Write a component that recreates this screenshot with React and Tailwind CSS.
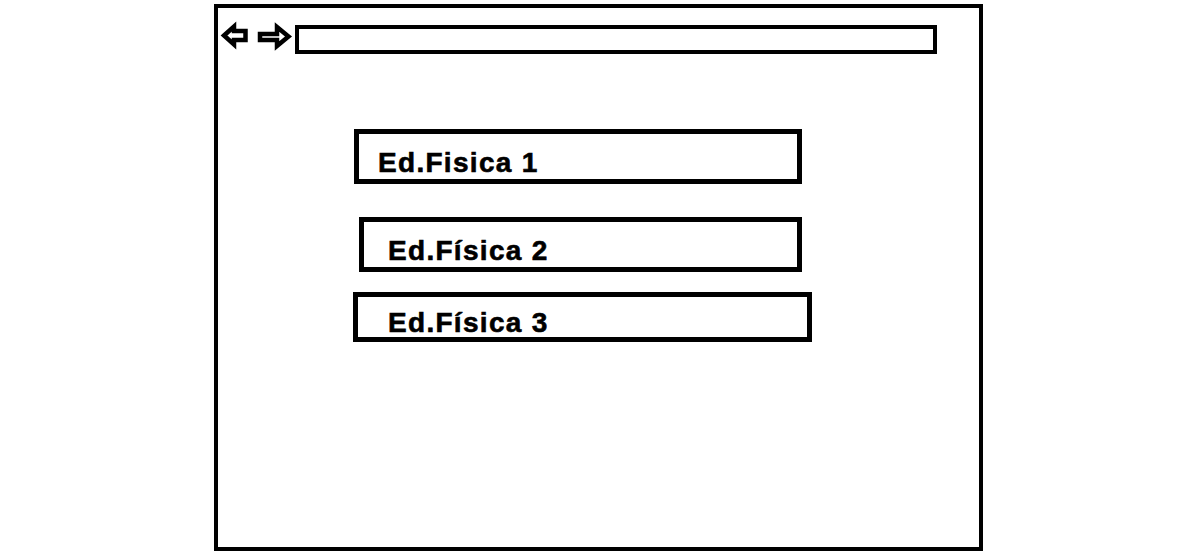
export default function App() {
  const items = [
    { label: "Ed.Fisica 1", box: "ml-[136px] mt-[75px] w-[448px] h-[55px] pl-[19px] pt-[15px]" },
    { label: "Ed.Física 2", box: "ml-[141px] mt-[33px] w-[443px] h-[55px] pl-[24px] pt-[15px]" },
    { label: "Ed.Física 3", box: "ml-[135px] mt-[20px] w-[459px] h-[50px] pl-[30px] pt-[12px]" },
  ];
  return (
    <div className="w-[1198px] h-[554px] bg-white overflow-hidden">
      <div className="ml-[214px] mt-[4px] w-[769px] h-[547px] border-4 border-black flex flex-col items-start">
        <div className="flex items-start pt-[17px]">
          <svg width="31" height="29" viewBox="0 0 31 29" className="overflow-visible">
            <polygon
              points="6,10.5 16,1.5 16,6 27.5,6 27.5,15 16,15 16,19.5"
              fill="none"
              stroke="black"
              strokeWidth="4.5"
              strokeLinejoin="miter"
            />
          </svg>
          <svg width="38" height="29" viewBox="0 0 38 29" className="ml-[6px] overflow-visible">
            <polygon
              points="5,9 22,9 22,2 33.5,11.5 22,21 22,15 5,15"
              fill="none"
              stroke="black"
              strokeWidth="4.5"
              strokeLinejoin="miter"
            />
          </svg>
          <div className="ml-[2px] w-[642px] h-[29px] border-4 border-black" />
        </div>
        {items.map((it) => (
          <div key={it.label} className={`${it.box} border-[5px] border-black`}>
            <div
              className="text-[28px] leading-[28px] font-bold tracking-[1.3px] text-black whitespace-nowrap [-webkit-text-stroke:0.6px_black]"
              style={{ fontFamily: '"Liberation Sans", Arial, sans-serif' }}
            >
              {it.label}
            </div>
          </div>
        ))}
      </div>
    </div>
  );
}
